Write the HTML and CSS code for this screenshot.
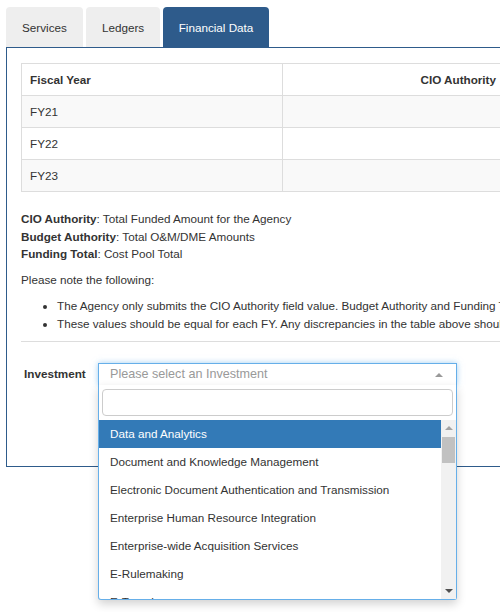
FILE: index.html
```html
<!DOCTYPE html>
<html>
<head>
<meta charset="utf-8">
<link rel="stylesheet" href="styles.css">
</head>
<body>
<div class="page">
  <div class="tabs">
    <div class="tab tab-services">Services</div>
    <div class="tab tab-ledgers">Ledgers</div>
    <div class="tab tab-active">Financial Data</div>
  </div>
  <div class="panel">
    <table class="fin-table">
      <thead>
        <tr><th class="col-fy">Fiscal Year</th><th class="col-num">CIO Authority</th><th class="col-num">Budget Authority</th><th class="col-num">Funding Total</th></tr>
      </thead>
      <tbody>
        <tr class="odd"><td>FY21</td><td></td><td></td><td></td></tr>
        <tr><td>FY22</td><td></td><td></td><td></td></tr>
        <tr class="odd"><td>FY23</td><td></td><td></td><td></td></tr>
      </tbody>
    </table>
    <div class="defs">
      <div><b>CIO Authority</b>: Total Funded Amount for the Agency</div>
      <div><b>Budget Authority</b>: Total O&amp;M/DME Amounts</div>
      <div><b>Funding Total</b>: Cost Pool Total</div>
    </div>
    <p class="note">Please note the following:</p>
    <ul class="bullets">
      <li>The Agency only submits the CIO Authority field value. Budget Authority and Funding Total are calculated from the submitted data.</li>
      <li>These values should be equal for each FY. Any discrepancies in the table above should be resolved before submission.</li>
    </ul>
    <hr class="rule">
    <div class="field">
      <label class="field-label">Investment</label>
      <div class="select">
        <div class="selection">
          <span class="placeholder">Please select an Investment</span>
          <span class="arrow"></span>
        </div>
        <div class="dropdown">
          <div class="search-wrap"><div class="search"></div></div>
          <div class="results">
            <ul class="options">
              <li class="option highlighted">Data and Analytics</li>
              <li class="option">Document and Knowledge Management</li>
              <li class="option">Electronic Document Authentication and Transmission</li>
              <li class="option">Enterprise Human Resource Integration</li>
              <li class="option">Enterprise-wide Acquisition Services</li>
              <li class="option">E-Rulemaking</li>
              <li class="option">E-Travel</li>
            </ul>
            <div class="scrollbar">
              <div class="sb-up"></div>
              <div class="sb-thumb"></div>
              <div class="sb-space"></div>
              <div class="sb-down"></div>
            </div>
          </div>
        </div>
      </div>
    </div>
  </div>
</div>
</body>
</html>
```

FILE: styles.css
```css
html, body {
  margin: 0;
  padding: 0;
}
body {
  width: 500px;
  height: 612px;
  overflow: hidden;
  font-family: "Liberation Sans", Arial, sans-serif;
  font-size: 11.7px;
  line-height: 17.5px;
  color: #333;
  background: #fff;
}
.page {
  padding: 7px 0 0 6px;
  width: 980px;
}
.tabs {
  display: flex;
  gap: 3px;
  height: 40px;
}
.tab {
  box-sizing: border-box;
  padding-top: 1px;
  display: flex;
  align-items: center;
  justify-content: center;
  background: #eee;
  border-radius: 4px 4px 0 0;
  color: #333;
}
.tab-services { width: 77px; }
.tab-ledgers { width: 74px; }
.tab-active {
  width: 106px;
  background: #2e5b8b;
  color: #fff;
}
.panel {
  box-sizing: border-box;
  height: 420px;
  border: 1px solid #2e5b8b;
  padding: 15px 14px 0 14px;
}
.fin-table {
  table-layout: fixed;
  width: 927px;
  border-collapse: collapse;
  border: 1px solid #ddd;
  margin-bottom: 18px;
}
.fin-table th,
.fin-table td {
  box-sizing: border-box;
  height: 32px;
  padding: 1px 8px 0 8px;
  border: 1px solid #ddd;
  text-align: left;
  vertical-align: middle;
}
.fin-table th { font-weight: bold; }
.fin-table .col-fy { width: 261px; }
.fin-table .col-num { width: 222px; text-align: right; }
.fin-table tr.odd td { background: #f9f9f9; }
.defs b { font-weight: bold; }
.note {
  margin: 8px 0 9px 0;
}
.bullets {
  margin: 0;
  padding-left: 36px;
  white-space: nowrap;
}
.rule {
  margin: 9px 0 0 0;
  border: 0;
  border-top: 1px solid #ddd;
}
.field {
  display: flex;
  align-items: flex-start;
  margin-top: 21px;
  padding-left: 3px;
}
.field-label {
  width: 74px;
  font-weight: bold;
  line-height: 22px;
}
.select {
  position: relative;
  width: 359px;
}
.selection {
  box-sizing: border-box;
  height: 22px;
  border: 1px solid #66afe9;
  border-bottom: 0;
  box-shadow: 0 0 6px rgba(102, 175, 233, 0.6);
  display: flex;
  align-items: center;
  padding: 0 11px;
  background: #fff;
  position: relative;
}
.placeholder {
  flex: 1;
  color: #999;
  font-size: 12.6px;
}
.arrow {
  width: 0;
  height: 0;
  border-left: 4px solid transparent;
  border-right: 4px solid transparent;
  border-bottom: 4px solid #999;
  margin-right: 2px;
}
.dropdown {
  position: absolute;
  left: 0;
  right: 0;
  top: 22px;
  box-sizing: border-box;
  border: 1px solid #66afe9;
  border-top: 0;
  background: #fff;
  box-shadow: 0 4px 10px rgba(0, 0, 0, 0.18);
  border-radius: 0 0 3px 3px;
}
.search-wrap {
  padding: 4px 3px 4px 3px;
}
.search {
  box-sizing: border-box;
  height: 27px;
  border: 1px solid #ccc;
  border-radius: 4px;
}
.results {
  display: flex;
  height: 179px;
  overflow: hidden;
}
.options {
  flex: 1;
  list-style: none;
  margin: 0;
  padding: 0;
}
.option {
  height: 28px;
  line-height: 28px;
  padding: 0 11px;
  white-space: nowrap;
}
.option.highlighted {
  background: #337ab7;
  color: #fff;
}
.scrollbar {
  width: 15px;
  background: #f1f1f1;
  display: flex;
  flex-direction: column;
  align-items: center;
}
.sb-up {
  margin-top: 6px;
  width: 0;
  height: 0;
  border-left: 4px solid transparent;
  border-right: 4px solid transparent;
  border-bottom: 4px solid #a3a3a3;
}
.sb-thumb {
  margin-top: 7px;
  width: 13px;
  height: 26px;
  background: #c1c1c1;
}
.sb-space { flex: 1; }
.sb-down {
  margin-bottom: 6px;
  width: 0;
  height: 0;
  border-left: 4px solid transparent;
  border-right: 4px solid transparent;
  border-top: 4px solid #505050;
}
```
